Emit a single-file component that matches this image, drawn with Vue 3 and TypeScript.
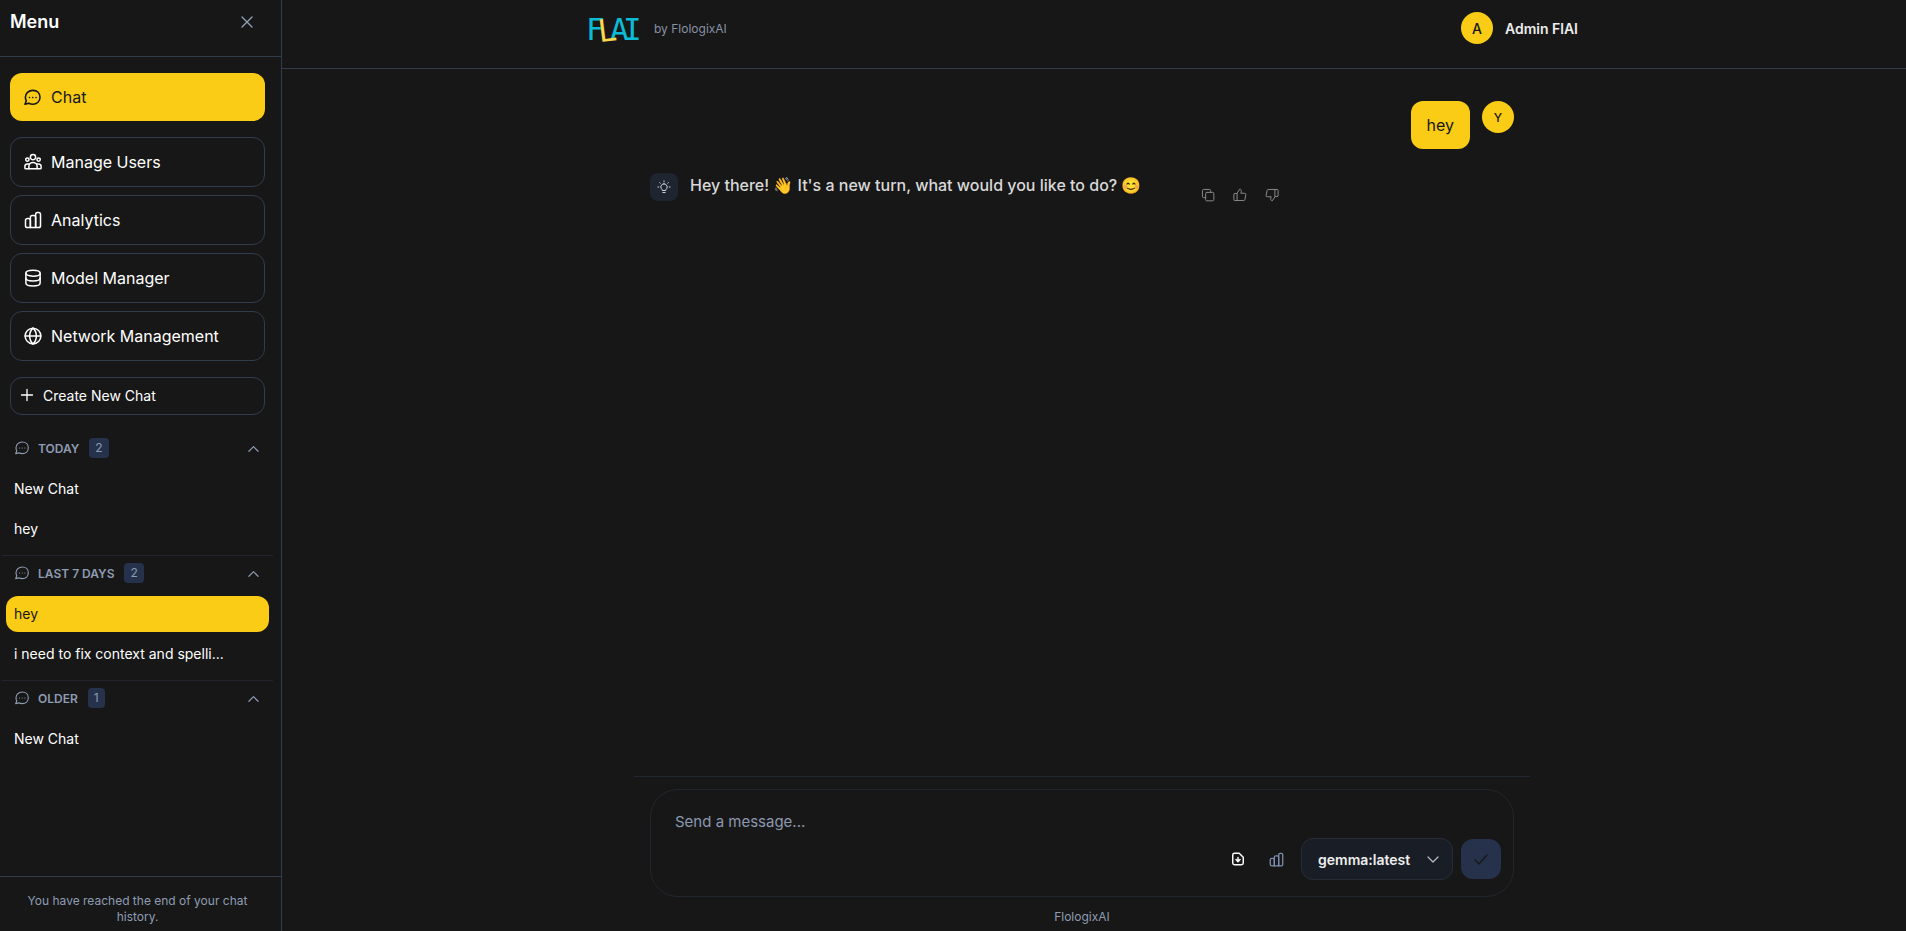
<script setup lang="ts">
import { ref } from 'vue'

interface NavItem { label: string; icon: string }
interface ChatGroup { title: string; chats: { title: string; active?: boolean }[] }

const icons: Record<string, string[]> = {
  chat: [
    'M12.5 3C18 3 21.5 6.8 21.5 11.8s-3.8 8.7-9.2 8.7c-1.9 0-3.5-.4-4.9-1.2L2.5 20.5l1.6-4.2C3.4 14.9 3 13.5 3 11.8 3 6.8 7 3 12.5 3Z',
    'M8.2 12h.1M12.3 12h.1M16.4 12h.1',
  ],
  users: [
    'M12 2a3.500 3.500 0 1 0 0 7a3.500 3.500 0 0 0 0-7Z',
    'M4.500 6.500a2.200 2.200 0 1 0 0 4.400a2.200 2.200 0 0 0 0-4.400ZM19.500 6.500a2.200 2.200 0 1 0 0 4.400a2.200 2.200 0 0 0 0-4.400Z',
    'M6.500 21v-3a5.500 5.500 0 0 1 11 0v3',
    'M7 14.500H4.500A3.300 3.300 0 0 0 1.200 17.800v2.200q0 1 1 1h19.600q1 0 1-1v-2.200a3.300 3.300 0 0 0-3.300-3.300H17',
  ],
  bars: [
    'M8.500 22h-4A2.500 2.500 0 0 1 2 19.500v-7A2.500 2.500 0 0 1 4.500 10h1.500a2.500 2.500 0 0 1 2.500 2.500V22Z',
    'M8.500 22V8.500A2.500 2.500 0 0 1 11 6h2a2.500 2.500 0 0 1 2.500 2.500V22h-7Z',
    'M15.500 22V4.500A2.500 2.500 0 0 1 18 2h1.500A2.500 2.500 0 0 1 22 4.500v15a2.500 2.500 0 0 1-2.500 2.500h-4Z',
  ],
  database: [
    'M12 1.500c5.500 0 9.500 1.600 9.500 4s-4 4-9.500 4-9.500-1.600-9.500-4 4-4 9.500-4Z',
    'M2.500 5.500v13c0 2.400 4 4 9.500 4s9.500-1.600 9.500-4v-13',
    'M2.500 12c0 2.400 4 4 9.500 4s9.500-1.600 9.500-4',
  ],
  globe: [
    'M12 1.500a10.500 10.500 0 1 0 0 21a10.500 10.500 0 0 0 0-21Z',
    'M1.500 12h21M12 1.500c-6 5.500-6 15.500 0 21M12 1.500c6 5.500 6 15.500 0 21',
  ],
}

const navItems: NavItem[] = [
  { label: 'Manage Users', icon: 'users' },
  { label: 'Analytics', icon: 'bars' },
  { label: 'Model Manager', icon: 'database' },
  { label: 'Network Management', icon: 'globe' },
]

const groups: ChatGroup[] = [
  { title: 'Today', chats: [{ title: 'New Chat' }, { title: 'hey' }] },
  { title: 'Last 7 days', chats: [{ title: 'hey', active: true }, { title: 'i need to fix context and spelli...' }] },
  { title: 'Older', chats: [{ title: 'New Chat' }] },
]

const draft = ref('')
const model = ref('gemma:latest')
</script>

<template>
  <div class="app">
    <aside class="sidebar">
      <div class="side-head">
        <h2>Menu</h2>
        <button class="plain" aria-label="Close menu">
          <svg width="14" height="14" viewBox="0 0 14 14" class="ic"><path d="M2 2l10 10M12 2L2 12" /></svg>
        </button>
      </div>

      <nav class="nav">
        <button class="nav-btn active">
          <svg width="19" height="19" viewBox="0 0 24 24" class="ic thick"><path v-for="d in icons.chat" :key="d" :d="d" /></svg>
          Chat
        </button>
        <div class="nav-list">
          <button v-for="item in navItems" :key="item.label" class="nav-btn">
            <svg width="18" height="18" viewBox="0 0 24 24" class="ic thick"><path v-for="d in icons[item.icon]" :key="d" :d="d" /></svg>
            {{ item.label }}
          </button>
        </div>
        <button class="create">
          <svg width="14" height="14" viewBox="0 0 14 14" class="ic"><path d="M7 1.500v11M1.500 7h11" /></svg>
          Create New Chat
        </button>
      </nav>

      <div class="history">
        <section v-for="group in groups" :key="group.title" class="group">
          <button class="group-head">
            <svg width="16" height="16" viewBox="0 0 24 24" class="ic mid"><path v-for="d in icons.chat" :key="d" :d="d" /></svg>
            <span class="group-title">{{ group.title }}</span>
            <span class="count">{{ group.chats.length }}</span>
            <svg width="11" height="11" viewBox="0 0 12 12" class="ic chev"><path d="M1 9l5-5 5 5" /></svg>
          </button>
          <a v-for="chat in group.chats" :key="chat.title" href="#" class="chat" :class="{ active: chat.active }">{{ chat.title }}</a>
        </section>
      </div>

      <p class="side-foot">You have reached the end of your chat history.</p>
    </aside>

    <main class="main">
      <header class="top">
        <div class="top-inner">
          <svg class="logo" width="56" height="44" viewBox="0 0 56 44" role="img" aria-label="FLAI">
            <g class="logo-text">
              <text x="0" y="34">F</text>
              <text x="24" y="34">A</text>
              <text x="37" y="34">I</text>
              <text x="13" y="36" class="l" transform="rotate(-7 15 35)">L</text>
            </g>
          </svg>
          <span class="by">by FlologixAI</span>
          <span class="avatar big">A</span>
          <span class="name">Admin FlAI</span>
        </div>
      </header>

      <div class="body">
        <div class="messages">
          <div class="msg user">
            <div class="bubble">hey</div>
            <span class="avatar">Y</span>
          </div>
          <div class="msg bot">
            <span class="bot-avatar">
              <svg width="14" height="14" viewBox="0 0 24 24" class="ic mid">
                <path d="M12 6.500a5.500 5.500 0 0 0-3 10.100V18h6v-1.400a5.500 5.500 0 0 0-3-10.100ZM10 21.500h4M12 1.500v1.500M4.500 4.500l1 1M19.500 4.500l-1 1M1.500 12H3M21 12h1.500" />
              </svg>
            </span>
            <p class="reply">Hey there! 👋 It's a new turn, what would you like to do? 😊</p>
            <div class="actions">
              <button class="plain" aria-label="Copy">
                <svg width="14" height="14" viewBox="0 0 24 24" class="ic mid"><path d="M10 7.500h10a2 2 0 0 1 2 2V20a2 2 0 0 1-2 2H10a2 2 0 0 1-2-2V9.500a2 2 0 0 1 2-2ZM8 16.500H4.500a2 2 0 0 1-2-2v-10a2 2 0 0 1 2-2h10a2 2 0 0 1 2 2v3" /></svg>
              </button>
              <button class="plain" aria-label="Good answer">
                <svg width="14" height="14" viewBox="0 0 24 24" class="ic mid"><path d="M7 9.500v12M3 9.500h3.500L11.500 2c2 0 3 1.500 2.600 3.500L13.500 9H20a2 2 0 0 1 2 2.400l-1.600 8.500A2 2 0 0 1 18.500 21.500H3a1.500 1.500 0 0 1-1.500-1.500v-9A1.500 1.500 0 0 1 3 9.500Z" /></svg>
              </button>
              <button class="plain" aria-label="Bad answer">
                <svg width="14" height="14" viewBox="0 0 24 24" class="ic mid"><path d="M17 14.500v-12M21 14.500h-3.500L12.500 22c-2 0-3-1.500-2.600-3.500l.6-3.500H4a2 2 0 0 1-2-2.400l1.600-8.500A2 2 0 0 1 5.500 2.500H21A1.500 1.500 0 0 1 22.500 4v9a1.500 1.500 0 0 1-1.500 1.500Z" /></svg>
              </button>
            </div>
          </div>
        </div>

        <footer class="dock">
          <form class="composer" @submit.prevent>
            <textarea v-model="draft" rows="1" aria-label="Message" placeholder="Send a message..."></textarea>
            <div class="tools">
              <button type="button" class="plain file" aria-label="Attach file">
                <svg width="14" height="14" viewBox="0 0 24 24" class="ic bold"><path d="M6 2h8l7 7v10a3 3 0 0 1-3 3H6a3 3 0 0 1-3-3V5a3 3 0 0 1 3-3ZM12 9.500V16M8.500 13l3.500 3.500 3.500-3.500" /></svg>
              </button>
              <button type="button" class="plain stats" aria-label="Statistics">
                <svg width="15" height="15" viewBox="0 0 24 24" class="ic thick"><path v-for="d in icons.bars" :key="d" :d="d" /></svg>
              </button>
              <div class="select">
                <select v-model="model" aria-label="Model">
                  <option>gemma:latest</option>
                </select>
                <svg width="12" height="12" viewBox="0 0 12 12" class="ic"><path d="M1 3l5 5 5-5" /></svg>
              </div>
              <button type="submit" class="send" aria-label="Send">
                <svg width="14" height="14" viewBox="0 0 14 14" class="ic"><path d="M1 8l4 4L13 3" /></svg>
              </button>
            </div>
          </form>
          <p class="credit">FlologixAI</p>
        </footer>
      </div>
    </main>
  </div>
</template>

<style>
body { margin: 0; background: #171717; }
</style>

<style scoped>
.app {
  --yellow: #facc15;
  --line: #303d4c;
  --muted: #8e9cb3;
  display: flex;
  height: 100vh;
  font-family: Inter, "Liberation Sans", "Noto Color Emoji", sans-serif;
  color: #fff;
  background: #171717;
}
* { box-sizing: border-box; }
h2, p { margin: 0; }
button, select, textarea { font: inherit; color: inherit; }
button { cursor: pointer; }
.ic { display: block; flex: none; fill: none; stroke: currentColor; stroke-width: 1.3; stroke-linecap: round; stroke-linejoin: round; }
.ic.mid { stroke-width: 1.7; }
.ic.thick { stroke-width: 2; }
.ic.bold { stroke-width: 2.5; }
.plain { display: flex; align-items: center; justify-content: center; padding: 0; border: 0; background: none; }

.sidebar { display: flex; flex-direction: column; flex: none; width: 282px; border-right: 1px solid var(--line); }
.side-head { display: flex; justify-content: space-between; height: 57px; padding: 8px 27px 20px 10px; border-bottom: 1px solid var(--line); }
.side-head h2 { font-size: 18px; line-height: 28px; font-weight: 600; }
.side-head .plain { color: #94a3b8; }
.nav { display: flex; flex-direction: column; gap: 16px; padding: 16px 16px 0 10px; }
.nav-list { display: flex; flex-direction: column; gap: 8px; }
.nav-btn { display: flex; align-items: center; gap: 9px; height: 50px; padding: 0 13px; border: 1px solid var(--line); border-radius: 12px; background: none; font-size: 16px; }
.nav-btn.active { height: 48px; border: 0; background: var(--yellow); color: #171717; }
.create { display: flex; align-items: center; gap: 9px; height: 38px; padding: 0 9px 2px; border: 1px solid var(--line); border-radius: 12px; background: none; font-size: 14px; }
.history { flex: 1; min-height: 0; padding: 15px 8px 0 2px; overflow: hidden; }
.group { display: flex; flex-direction: column; gap: 4px; padding-bottom: 8px; border-top: 1px solid #22262c; }
.group:first-child { border-color: transparent; }
.group-head { display: flex; align-items: center; height: 36px; padding: 0 14px 2px 12px; border: 0; background: none; color: var(--muted); font-size: 12px; }
.group-title { margin: 0 10px 0 8px; font-weight: 600; text-transform: uppercase; }
.count { padding: 0 6px; border-radius: 4px; background: #26324b; line-height: 20px; font-size: 12px; }
.chev { margin-left: auto; }
.chat { height: 36px; margin: 0 4px; padding: 0 8px; border-radius: 12px; line-height: 36px; font-size: 14px; color: #fff; text-decoration: none; white-space: nowrap; }
.chat.active { background: var(--yellow); color: #171717; }
.side-foot { padding: 16px 24px 6px 18px; border-top: 1px solid var(--line); color: var(--muted); font-size: 12px; line-height: 16px; text-align: center; }

.main { display: flex; flex-direction: column; flex: 1; min-width: 0; }
.top { height: 69px; padding: 6px 24px 0 0; border-bottom: 1px solid var(--line); }
.top-inner { display: flex; align-items: center; max-width: 1024px; margin: 0 auto; padding: 0 16px; }
.logo { display: block; }
.logo-text { font-family: "DejaVu Sans Mono", monospace; font-size: 31px; fill: #0bbcd6; }
.logo-text .l { fill: #fbd64e; }
.by { margin-left: 12px; margin-right: auto; color: #8791a5; font-size: 12px; }
.avatar { display: flex; align-items: center; justify-content: center; flex: none; width: 32px; height: 32px; border-radius: 50%; background: var(--yellow); color: #171717; font-size: 12px; font-weight: 500; }
.avatar.big { font-size: 14px; }
.name { margin-left: 12px; font-size: 14px; font-weight: 600; color: #ececec; }

.body { display: flex; flex-direction: column; align-items: center; flex: 1; min-height: 0; padding-right: 24px; }
.messages, .dock { width: 100%; max-width: 896px; }
.messages { display: flex; flex-direction: column; flex: 1; gap: 24px; padding: 32px 16px 0; }
.msg { display: flex; align-items: flex-start; }
.msg.user { justify-content: flex-end; gap: 12px; }
.bubble { padding: 12px 16px; border-radius: 12px; background: var(--yellow); color: #171717; font-size: 16px; line-height: 24px; }
.bot-avatar { display: flex; align-items: center; justify-content: center; flex: none; width: 28px; height: 28px; border-radius: 8px; background: #1e2430; color: #d0d4da; }
.reply { margin-left: 12px; font-size: 16px; line-height: 24px; font-weight: 500; color: #d9d9d9; }
.actions { display: flex; gap: 18px; margin: 15px 0 0 60px; color: #8a8a8a; }

.dock { padding: 12px 16px 6px; border-top: 1px solid #222833; }
.composer { border: 1px solid #22272f; border-radius: 28px; padding: 20px 12px 16px 24px; }
textarea { display: block; width: 100%; height: 28px; padding: 0; border: 0; outline: 0; resize: none; background: none; font-size: 15px; line-height: 24px; }
textarea::placeholder { color: #8d98b0; opacity: 1; }
.tools { display: flex; align-items: center; justify-content: flex-end; gap: 8px; height: 42px; }
.file { margin-right: 16px; }
.stats { margin-right: 9px; color: #8090b0; }
.select { position: relative; }
.select select { appearance: none; display: block; width: 152px; height: 42px; padding: 0 32px 0 16px; border: 1px solid #252d39; border-radius: 12px; background: #191d25; color: #eee; font-size: 14px; font-weight: 600; }
.select .ic { position: absolute; right: 14px; top: 16px; color: #b4b8c0; pointer-events: none; }
.send { display: flex; align-items: center; justify-content: center; width: 40px; height: 40px; padding: 0; border: 0; border-radius: 12px; background: #26324b; color: #171717; }
.credit { margin-top: 12px; color: var(--muted); font-size: 12px; line-height: 16px; text-align: center; }
</style>
